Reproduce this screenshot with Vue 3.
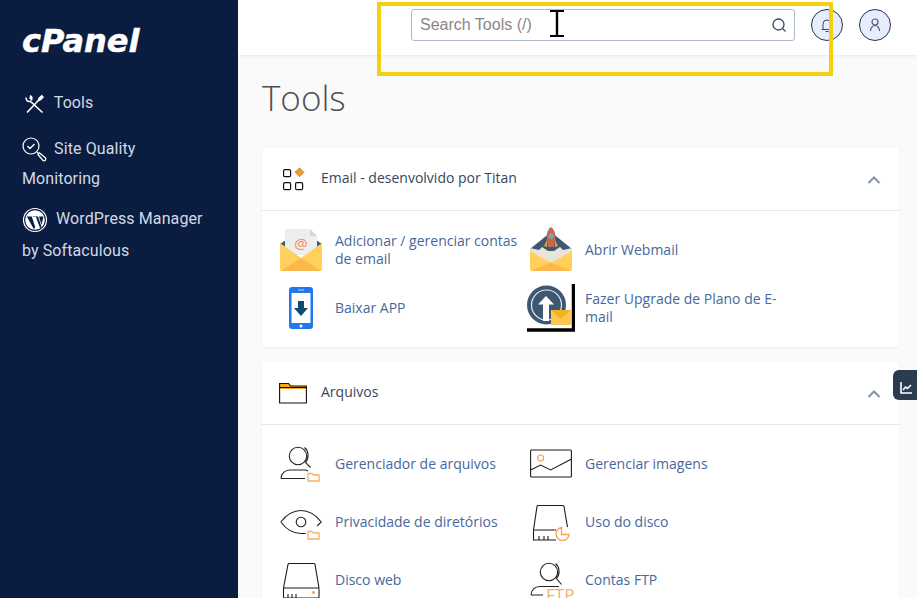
<script setup>
const sections = [
  {
    title: 'Email - desenvolvido por Titan',
    icon: 'grid',
    items: [
      { label: 'Adicionar / gerenciar contas de email', icon: 'mail' },
      { label: 'Abrir Webmail', icon: 'webmail' },
      { label: 'Baixar APP', icon: 'phone' },
      { label: 'Fazer Upgrade de Plano de E-mail', icon: 'upgrade' },
    ],
  },
  {
    title: 'Arquivos',
    icon: 'folder',
    items: [
      { label: 'Gerenciador de arquivos', icon: 'files' },
      { label: 'Gerenciar imagens', icon: 'images' },
      { label: 'Privacidade de diretórios', icon: 'eye' },
      { label: 'Uso do disco', icon: 'usage' },
      { label: 'Disco web', icon: 'disk' },
      { label: 'Contas FTP', icon: 'ftp' },
    ],
  },
]
</script>

<template>
  <div class="page">
    <aside class="sidebar">
      <div class="logo">cPanel</div>
      <nav class="nav">
        <a class="nav-link nav-link-tools">
          <svg class="nav-icon" width="20" height="20" viewBox="0 0 20 20" fill="none" stroke="#fff" stroke-width="1.600">
            <path d="M3 18.500l9.500-10" />
            <path d="M12.500 8.500l2-2.200 1-2.300 2.300-2 1 1-2 2.300-2.300 1" stroke-width="1.800" />
            <path d="M2.200 3.500a3 3 0 0 0 4 3.700L18.500 18.500M5.800 1.800a3 3 0 0 1 1.800 3.800L5.500 3.500" />
          </svg>
          Tools
        </a>
        <a class="nav-link nav-link-site">
          <svg class="nav-icon" width="26" height="26" viewBox="0 0 26 26" fill="none" stroke="#fff" stroke-width="1.200">
            <circle cx="9" cy="9" r="8" />
            <path d="M5.500 9l2.500 2.500 4.500-4.500" stroke-width="1.400" />
            <path d="M15 15l2 2M17 15.500l6.500 5.500a1.800 1.800 0 0 1-2.500 2.500l-5.500-6.500" />
          </svg>
          Site Quality Monitoring
        </a>
        <a class="nav-link nav-link-wp">
          <svg class="nav-icon" width="26" height="26" viewBox="0 0 26 26">
            <circle cx="13" cy="13" r="11.500" fill="none" stroke="#fff" stroke-width="1.200" />
            <circle cx="13" cy="13" r="9.800" fill="#fff" />
            <path d="M4.800 9.500h5l3.500 11-1.500 1.500zM10 9.500h6l3.500 10.500-1.500 1-4-11h-2.500zM17 9.500h4.500l-2 8.500z" fill="#0a1c40" />
          </svg>
          WordPress Manager by Softaculous
        </a>
      </nav>
    </aside>

    <div class="main">
      <header class="topbar">
        <div class="search">
          <input class="search-input" type="text" placeholder="Search Tools (/)" />
          <svg width="16" height="16" viewBox="0 0 16 16" fill="none" stroke="#2f4a6b" stroke-width="1.300">
            <circle cx="7.500" cy="7.500" r="5.500" />
            <path d="M11.500 11.500l3 3" />
          </svg>
        </div>
        <button class="round-btn">
          <svg width="16" height="16" viewBox="0 0 16 16" fill="none" stroke="#2f4a6b" stroke-width="1">
            <path d="M2.500 12.500h11M4 12.500V7a4 4 0 0 1 8 0v5.500M6.500 14.500h3" />
          </svg>
        </button>
        <button class="round-btn">
          <svg width="16" height="16" viewBox="0 0 16 16" fill="none" stroke="#4a5d7c" stroke-width="1.200">
            <circle cx="8" cy="5" r="3" />
            <path d="M3.500 14c0-3 2-5.500 4.500-5.500s4.500 2.500 4.500 5.500" />
          </svg>
        </button>
      </header>

      <main class="content">
        <h1 class="page-title">Tools</h1>

        <section v-for="section in sections" :key="section.title" class="card">
          <div class="card-header">
            <svg v-if="section.icon === 'grid'" class="head-icon" width="28" height="28" viewBox="0 0 28 28" fill="none" stroke="#111" stroke-width="1.200">
              <rect x="4.600" y="5.600" width="7" height="7" rx="1.200" />
              <rect x="4.600" y="18.600" width="7" height="7" rx="1.200" />
              <rect x="16.600" y="18.600" width="7" height="7" rx="1.200" />
              <path d="M20.500 3.800l4.500 4.500-4.500 4.500-4.500-4.500z" fill="#f09a2e" stroke="#a8701f" stroke-width=".600" />
            </svg>
            <svg v-else class="head-icon" width="28" height="28" viewBox="0 0 28 28" fill="none">
              <path d="M.6 5.500h9l2 2.500h15.800v3H.6z" fill="#f5a623" />
              <path d="M.6 5.500h9l2 2.500h15.800v17H.6zM.6 9.500h27.800" stroke="#111" stroke-width="1.100" />
            </svg>
            <span class="card-title">{{ section.title }}</span>
            <svg class="chevron" width="14" height="10" viewBox="0 0 14 10" fill="none" stroke="#8593a8" stroke-width="2">
              <path d="M1.500 8l5.500-5.500L12.500 8" />
            </svg>
          </div>
          <div class="card-body">
            <a v-for="item in section.items" :key="item.label" class="tool">
              <span class="tool-icon">
                <svg v-if="item.icon === 'mail'" width="42" height="42" viewBox="0 0 42 42">
                  <path d="M0 15L21 1l21 14v8H0z" fill="#3f5872" />
                  <path d="M5 26V0h25l7 7v19z" fill="#eeeeee" />
                  <path d="M30 0v7h7z" fill="#cfd8e0" />
                  <text x="21" y="20" class="at">@</text>
                  <path d="M0 14l21 15 21-15v26a2 2 0 0 1-2 2H2a2 2 0 0 1-2-2z" fill="#ffd05b" />
                  <path d="M.5 42L21 29l20.500 13z" fill="#fbb84e" />
                </svg>
                <svg v-else-if="item.icon === 'webmail'" class="icon-free" width="42" height="42" viewBox="0 0 42 42">
                  <path d="M0 20L21 3l21 17v7H0z" fill="#3f5872" />
                  <path d="M0 19l9 2 3-3 6 4h6l6-4 3 3 9-2v11L21 34 0 30z" fill="#e9e3d8" />
                  <path d="M21-2c4 3 5 8 4 14l-1 6h-6l-1-6c-1-6 0-11 4-14z" fill="#c9694a" />
                  <path d="M17 11l-3 6 3 1zM25 11l3 6-3 1z" fill="#f0a030" />
                  <circle cx="21" cy="7" r="2.500" fill="#6fa8d8" />
                  <path d="M0 22l21 12 21-12v18a2 2 0 0 1-2 2H2a2 2 0 0 1-2-2z" fill="#ffd05b" />
                  <path d="M.5 42L21 33.500 41.500 42z" fill="#fbb84e" />
                </svg>
                <svg v-else-if="item.icon === 'phone'" width="42" height="42" viewBox="0 0 42 42">
                  <rect x="9" y="0" width="24" height="42" rx="3" fill="#2377ee" />
                  <rect x="11.500" y="6" width="19" height="30" fill="#fff" />
                  <path d="M18 14h6v7h4l-7 8-7-8h4z" fill="#0f4a73" />
                  <circle cx="21" cy="39" r="1.500" fill="#fff" />
                  <rect x="18" y="2.500" width="6" height="1" fill="#bcd6fa" />
                </svg>
                <svg v-else-if="item.icon === 'upgrade'" class="icon-wide" width="48" height="48" viewBox="0 0 48 48">
                  <circle cx="19.500" cy="21" r="19.500" fill="#3f5872" />
                  <circle cx="19.500" cy="21" r="15" fill="none" stroke="#e6edf2" stroke-width="1.200" />
                  <path d="M19 12l8 8.500h-5V37h-6V20.500h-5z" fill="#fff" />
                  <rect x="24" y="26" width="20" height="15" fill="#f9c752" />
                  <path d="M24 26h20l-10 9z" fill="#f3b31e" />
                  <path d="M0 46h46.500V0" fill="none" stroke="#000" stroke-width="3.500" />
                </svg>
                <svg v-else-if="item.icon === 'files'" width="42" height="42" viewBox="0 0 42 42" fill="none" stroke="#222" stroke-width="1.100">
                  <circle cx="18" cy="13" r="8.700" />
                  <path d="M24.500 4.500c4 3 5 10 1 15l5 5M1 35.500c0-5 4-8.500 9-8.500h16l2 1M1 35.500h24" />
                  <path d="M28 30.500h4l1.500 1.500h5.500v6H28z" stroke="#f7b06a" stroke-width="1.300" />
                </svg>
                <svg v-else-if="item.icon === 'eye'" width="42" height="42" viewBox="0 0 42 42" fill="none" stroke="#222" stroke-width="1.100">
                  <path d="M.8 21C7 13 14 9.500 21 9.500S35 13 41.200 21l-4 4M.8 21c6 8 13 11.500 20 11.500h5" />
                  <circle cx="21" cy="21" r="4.800" />
                  <path d="M28 30.500h4l1.500 1.500h5.500v6H28z" stroke="#f7b06a" stroke-width="1.300" />
                </svg>
                <svg v-else-if="item.icon === 'images'" width="42" height="42" viewBox="0 0 42 42" fill="none" stroke="#1d1d1d" stroke-width="1.100">
                  <rect x=".6" y="7" width="40.800" height="27" rx="1" />
                  <path d="M.6 27l10-5 10 5 21-11" />
                  <circle cx="10.600" cy="15" r="3" stroke="#f5a04a" stroke-width="1.200" />
                </svg>
                <svg v-else-if="item.icon === 'usage'" width="42" height="42" viewBox="0 0 42 42" fill="none" stroke="#1d1d1d" stroke-width="1.100">
                  <path d="M3.500 29L7 5.500a1.500 1.500 0 0 1 1-1h25a1.500 1.500 0 0 1 1 1L37.500 26M3.500 29v10h22.500M3.500 29h22.500M9 39v-4M14 39v-4M18 39v-4" />
                  <path d="M31.500 26.500a6.500 6.500 0 1 0 7.500 7h-7.500z" stroke="#f5a04a" stroke-width="1.300" />
                </svg>
                <svg v-else-if="item.icon === 'disk'" width="42" height="42" viewBox="0 0 42 42" fill="none" stroke="#1d1d1d" stroke-width="1.100">
                  <path d="M3.500 29L8 5.500a1.500 1.500 0 0 1 1-1h25a1.500 1.500 0 0 1 1 1L39 29M4.500 29h33.500a1 1 0 0 1 1 1v8a1 1 0 0 1-1 1H4.500a1 1 0 0 1-1-1v-8a1 1 0 0 1 1-1zM8 39v-4M12 39v-4M16 39v-4" />
                  <circle cx="33.500" cy="33.500" r="1.400" fill="#f5a04a" stroke="none" />
                </svg>
                <svg v-else class="icon-free" width="42" height="42" viewBox="0 0 42 42" fill="none" stroke="#222" stroke-width="1.100">
                  <circle cx="19" cy="13" r="8.700" />
                  <path d="M25.500 4.500c4 3 5 10 1 15l5 6M1 36c0-5 4-8.500 9-8.500h19M1 36h12" />
                  <text x="16" y="41.500" class="ftp">FTP</text>
                </svg>
              </span>
              <span class="tool-label">{{ item.label }}</span>
            </a>
          </div>
        </section>
      </main>
    </div>

    <div class="stats-tab">
      <svg width="12" height="12" viewBox="0 0 12 12" fill="none" stroke="#fff" stroke-width="1.600">
        <path d="M1 0v11h11" />
        <path d="M3 8l2.500-3 2 1.500L11 3" />
      </svg>
    </div>

    <div class="highlight"></div>
    <svg class="cursor" width="14" height="27" viewBox="0 0 14 27" fill="none" stroke="#000">
      <path d="M0 1h14M0 26h14" stroke-width="2" />
      <path d="M7 1v25" stroke-width="2.400" />
    </svg>
  </div>
</template>

<style scoped>
.page {
  position: relative;
  display: flex;
  height: 598px;
  overflow: hidden;
  background: #fafafa;
  font-family: "Open Sans", sans-serif;
}

.sidebar {
  flex: 0 0 238px;
  padding: 0 22px;
  box-sizing: border-box;
  background: #0a1c40;
}

.logo {
  margin-top: 21px;
  height: 40px;
  color: #fff;
  font-family: "DejaVu Sans", sans-serif;
  font-size: 32px;
  font-weight: 700;
  font-style: italic;
  line-height: 40px;
  -webkit-text-stroke: 0.5px #fff;
}

.nav {
  margin-top: 27px;
}

.nav-link {
  display: block;
  color: #d3d9e4;
  font-family: Roboto, sans-serif;
  font-size: 16px;
  line-height: 30px;
  letter-spacing: 0.1px;
}

.nav-icon {
  vertical-align: middle;
}

.nav-link-tools {
  margin-bottom: 16px;
}

.nav-link-tools .nav-icon {
  margin: 0 6px 0 2px;
}

.nav-link-site {
  margin-bottom: 9px;
}

.nav-link-site .nav-icon {
  margin-right: 2px;
}

.nav-link-wp {
  line-height: 32px;
}

.nav-link-wp .nav-icon {
  margin-right: 4px;
}

.main {
  flex: 1;
  min-width: 0;
}

.topbar {
  display: flex;
  align-items: center;
  justify-content: flex-end;
  gap: 16px;
  height: 55px;
  padding: 0 26px 5px 0;
  box-sizing: border-box;
  background: #fff;
  box-shadow: 0 1px 3px rgba(0, 0, 0, 0.08);
}

.search {
  display: flex;
  align-items: center;
  width: 384px;
  height: 32px;
  padding: 0 7px 0 8px;
  box-sizing: border-box;
  background: #fff;
  border: 1px solid #b0b9cc;
  border-radius: 3px;
}

.search-input {
  flex: 1;
  min-width: 0;
  border: 0;
  outline: 0;
  padding: 0;
  background: transparent;
  font-family: "Liberation Sans", sans-serif;
  font-size: 16px;
}

.search-input::placeholder {
  color: #8b8589;
}

.round-btn {
  display: flex;
  align-items: center;
  justify-content: center;
  width: 32px;
  height: 32px;
  padding: 0;
  background: #e8edfb;
  border: 1px solid #1f3554;
  border-radius: 50%;
}

.content {
  padding: 0 18px 0 24px;
}

.page-title {
  margin: 0;
  padding: 17px 0 25px;
  color: #4a4f57;
  font-size: 35px;
  font-weight: 300;
  line-height: 51px;
}

.card {
  margin-bottom: 15px;
  background: #fff;
  box-shadow: 0 1px 3px rgba(0, 0, 0, 0.05);
  border-radius: 2px;
}

.card-header {
  display: flex;
  align-items: center;
  height: 63px;
  padding: 0 18px 3px 17px;
  box-sizing: border-box;
  border-bottom: 1px solid #e3e8ef;
}

.head-icon {
  margin-right: 14px;
}

.card-title {
  flex: 1;
  color: #36465c;
  font-size: 14px;
}

.chevron {
  margin-top: 5px;
}

.card-body {
  display: grid;
  grid-template-columns: repeat(2, 250px);
  padding: 10px 18px;
}

.tool {
  display: flex;
  align-items: center;
  height: 58px;
}

.tool-icon {
  display: flex;
  flex: 0 0 55px;
  align-items: center;
}

.icon-wide {
  margin-left: -3px;
}

.icon-free {
  overflow: visible;
}

.tool-label {
  width: 195px;
  color: #47689c;
  font-size: 14px;
  line-height: 18px;
}

.at {
  fill: #ef8d55;
  font-family: "Open Sans", sans-serif;
  font-size: 15px;
  text-anchor: middle;
}

.ftp {
  fill: #f7b06a;
  stroke: none;
  font-family: "Open Sans", sans-serif;
  font-size: 17px;
}

.stats-tab {
  position: absolute;
  top: 370px;
  right: 0;
  display: flex;
  align-items: center;
  justify-content: center;
  width: 24px;
  height: 30px;
  padding: 6px 0 0 1px;
  box-sizing: border-box;
  background: #2b3b50;
  border-radius: 6px 0 0 6px;
}

.highlight {
  position: absolute;
  top: 2px;
  left: 377px;
  width: 448px;
  height: 66px;
  border: 4px solid #f3d011;
  pointer-events: none;
}

.cursor {
  position: absolute;
  top: 10px;
  left: 550px;
}
</style>

<style>
html,
body {
  margin: 0;
}
</style>
